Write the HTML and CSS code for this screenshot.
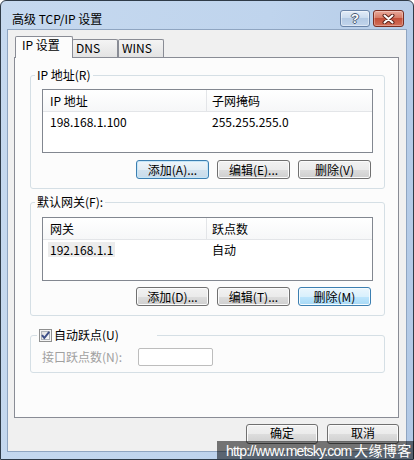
FILE: index.html
```html
<!DOCTYPE html>
<html lang="zh-CN">
<head>
<meta charset="utf-8">
<title>高级 TCP/IP 设置</title>
<link rel="stylesheet" href="styles.css">
</head>
<body>
<div class="window">
  <div class="titlebar">
    <span class="title">高级 TCP/IP 设置</span>
    <div class="caption-btns">
      <div class="cap help"><span class="q">?</span></div>
      <div class="cap close">
        <svg width="13" height="10" viewBox="0 0 13 10">
          <path d="M2.5 1.5 L10.5 8.5 M10.5 1.5 L2.5 8.5" stroke="#5b2219" stroke-width="4" stroke-linecap="round"/>
          <path d="M2.5 1.5 L10.5 8.5 M10.5 1.5 L2.5 8.5" stroke="#ffffff" stroke-width="2" stroke-linecap="round"/>
        </svg>
      </div>
    </div>
  </div>
  <div class="client">
    <div class="tabs">
      <div class="tab active">IP 设置</div>
      <div class="tab first-inactive">DNS</div>
      <div class="tab">WINS</div>
    </div>
    <div class="page">
      <fieldset class="group">
        <legend class="glabel">IP 地址(R)</legend>
        <div class="gbody">
          <div class="lv">
            <div class="lv-head"><div class="c1">IP 地址</div><div class="c2">子网掩码</div></div>
            <div class="lv-row"><div class="c1"><span class="cell">198.168.1.100</span></div><div class="c2"><span class="cell">255.255.255.0</span></div></div>
          </div>
          <div class="btnrow">
            <button class="btn default">添加(A)...</button>
            <button class="btn">编辑(E)...</button>
            <button class="btn">删除(V)</button>
          </div>
        </div>
      </fieldset>
      <fieldset class="group g2">
        <legend class="glabel">默认网关(F):</legend>
        <div class="gbody b2">
          <div class="lv">
            <div class="lv-head"><div class="c1">网关</div><div class="c2">跃点数</div></div>
            <div class="lv-row"><div class="c1"><span class="cell sel">192.168.1.1</span></div><div class="c2"><span class="cell">自动</span></div></div>
          </div>
          <div class="btnrow r2">
            <button class="btn">添加(D)...</button>
            <button class="btn">编辑(T)...</button>
            <button class="btn hover">删除(M)</button>
          </div>
        </div>
      </fieldset>
      <fieldset class="group g3">
        <legend class="glabel chklabel"><svg class="chk" width="13" height="13" viewBox="0 0 13 13">
            <defs><linearGradient id="cb" x1="0" y1="0" x2="1" y2="1"><stop offset="0" stop-color="#dcdcdc"/><stop offset="1" stop-color="#ffffff"/></linearGradient></defs>
            <rect x="0.5" y="0.5" width="12" height="12" fill="#f4f4f4" stroke="#8e8f8f"/>
            <rect x="2.5" y="2.5" width="8" height="8" fill="url(#cb)" stroke="#aeb3b9"/>
            <path d="M3 6.2 L5.3 9 L10.2 2.8" fill="none" stroke="#3d4f87" stroke-width="2"/>
          </svg><span class="chktext">自动跃点(U)</span></legend>
        <div class="gbody b3">
          <span class="dislabel">接口跃点数(N):</span>
          <span class="textbox"></span>
        </div>
      </fieldset>
    </div>
    <div class="footer">
      <button class="btn big">确定</button>
      <button class="btn big">取消</button>
    </div>
  </div>
  <div class="watermark"><span class="wm-en">http://www.metsky.com</span> <span class="wm-cn">大缘博客</span></div>
</div>
</body>
</html>
```
FILE: styles.css
```css
* { box-sizing: border-box; }
html, body { margin: 0; padding: 0; background: #ffffff; }
body {
  width: 414px;
  height: 460px;
  overflow: hidden;
  font: 12px/14px "Noto Sans CJK SC", "Liberation Sans", sans-serif;
  color: #000;
}
.window {
  position: relative;
  width: 414px;
  height: 460px;
  border: 1px solid #2f3b48;
  border-radius: 6px 6px 0 0;
  background: linear-gradient(100deg, #c6d9ef 0%, #bfd4ed 55%, #b2c9e6 100%);
  padding: 0 6px 7px 6px;
  display: flex;
  flex-direction: column;
}
.titlebar {
  height: 28px;
  display: flex;
  justify-content: space-between;
  align-items: flex-start;
}
.title {
  padding: 11px 0 0 5px;
  line-height: 14px;
  color: #000;
}
.caption-btns {
  display: flex;
  margin-top: 9px;
  margin-right: 3px;
}
.cap {
  height: 17px;
  border-radius: 3px;
  display: flex;
  align-items: center;
  justify-content: center;
}
.help {
  width: 30px;
  border: 1px solid #6a84a8;
  background: linear-gradient(#e2ecf8 0%, #cbdcef 45%, #b4cae4 50%, #c2d5ec 100%);
  box-shadow: inset 0 0 0 1px rgba(255,255,255,0.45);
}
.q {
  font: bold 13px/13px "Liberation Sans", sans-serif;
  color: #fff;
  text-shadow: 1px 0 0 #4a5b73, -1px 0 0 #4a5b73, 0 1px 0 #4a5b73, 0 -1px 0 #4a5b73;
}
.close {
  width: 31px;
  margin-left: 3px;
  border: 1px solid #7a2e22;
  background: linear-gradient(#eaaa9c 0%, #d77c67 45%, #c4503a 50%, #d2705a 100%);
  box-shadow: inset 0 0 0 1px rgba(255,255,255,0.3);
}
.client {
  flex: 1;
  border: 1px solid #8fa5c1;
  background: #f0f0f0;
  padding: 6px 7px 0 6px;
  display: flex;
  flex-direction: column;
}
.tabs {
  height: 21px;
  display: flex;
  align-items: flex-end;
  padding-left: 1px;
}
.tab {
  height: 18px;
  width: 46px;
  border: 1px solid #898c95;
  border-bottom: 0;
  background: linear-gradient(#f4f4f4, #e3e3e3);
  padding: 1px 0 0 3px;
  line-height: 14px;
  border-radius: 2px 2px 0 0;
}
.tab.first-inactive { margin-left: -1px; }
.tab.active {
  position: relative;
  z-index: 2;
  width: 58px;
  height: 22px;
  margin-bottom: -1px;
  background: #fcfcfc;
  padding: 1px 0 0 6px;
}
.page {
  height: 361px;
  border: 1px solid #898c95;
  background: #fcfcfc;
  padding: 10px 13px 0 15px;
}
.group {
  margin: 0;
  padding: 0;
  min-width: 0;
  border: 1px solid #d5dfe5;
  border-radius: 3px;
}
.glabel {
  margin-left: 4px;
  padding: 0 2px;
  line-height: 14px;
}
.g2 { margin-top: 6px; }
.g3 { margin-top: 12px; }
.gbody { padding: 7px 11px 9px 11px; }
.gbody.b2 { padding-top: 8px; }
.lv {
  height: 64px;
  border: 1px solid #828790;
  background: #fff;
}
.lv-head {
  display: flex;
  height: 22px;
  border-bottom: 1px solid #e3e5e8;
  background: linear-gradient(#ffffff, #f6f7f8);
}
.lv-head .c1, .lv-head .c2 { padding-top: 4px; }
.lv-head .c1 { border-right: 1px solid #e3e5e8; }
.c1 { width: 164px; padding-left: 7px; }
.c2 { flex: 1; padding-left: 5px; }
.lv-row { display: flex; padding-top: 2px; }
.cell { display: inline-block; line-height: 15px; }
.cell.sel { background: #ececec; padding: 0 2px; margin-left: -2px; }
.btnrow {
  display: flex;
  justify-content: flex-end;
  gap: 8px;
  margin-top: 7px;
  padding-right: 2px;
}
.btnrow.r2 { margin-top: 6px; }
.btn {
  width: 73px;
  height: 19px;
  padding: 0;
  font: 12px/17px "Noto Sans CJK SC", "Liberation Sans", sans-serif;
  color: #000;
  border: 1px solid #707070;
  border-radius: 3px;
  background: linear-gradient(#f2f2f2 0%, #ebebeb 50%, #dddddd 50%, #cfcfcf 100%);
  box-shadow: inset 0 0 0 1px #fbfbfb;
}
.btn.default {
  border-color: #3c7fb1;
  background: linear-gradient(#eef5fa 0%, #e2edf5 50%, #d2e2ee 50%, #c8dbea 100%);
  box-shadow: inset 0 0 0 1px #c6e6f8;
}
.btn.hover {
  border-color: #3c7fb1;
  background: linear-gradient(#eaf6fd 0%, #d9f0fc 50%, #bee6fd 50%, #a7d9f5 100%);
  box-shadow: inset 0 0 0 1px #f4fbfe;
}
.chklabel {
  margin-left: 6px;
  padding: 0 2px;
  width: 120px;
  display: flex;
  align-items: center;
  height: 14px;
}
.chk { display: block; flex: none; }
.chktext { margin-left: 2px; }
.gbody.b3 {
  display: flex;
  align-items: center;
  padding: 6px 11px 6px 11px;
}
.dislabel { width: 96px; color: #a0a0a0; }
.textbox {
  width: 75px;
  height: 18px;
  border: 1px solid #bdbdbd;
  border-radius: 2px;
  background: #fff;
}
.footer {
  display: flex;
  justify-content: flex-end;
  gap: 9px;
  margin-top: 6px;
}
.btn.big { width: 72px; height: 20px; line-height: 16px; padding-bottom: 2px; }
.watermark {
  position: absolute;
  left: 216px;
  top: 440px;
  right: -1px;
  height: 18px;
  background: rgba(0, 0, 0, 0.52);
  color: #fff;
  padding-left: 9px;
  line-height: 18px;
  white-space: nowrap;
  overflow: hidden;
}
.wm-en { font: 14px/18px "Liberation Sans", sans-serif; letter-spacing: -0.8px; }
.wm-cn { font: 14px/18px "Noto Sans CJK SC", sans-serif; letter-spacing: 0.4px; }
```
